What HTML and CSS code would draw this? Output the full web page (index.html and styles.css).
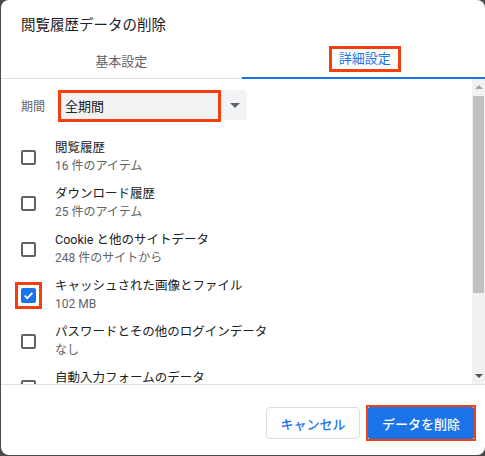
FILE: index.html
```html
<!DOCTYPE html>
<html lang="ja">
<head>
<meta charset="utf-8">
<link rel="stylesheet" href="styles.css">
</head>
<body>
<div class="dialog">
  <div class="title">閲覧履歴データの削除</div>
  <div class="tabs">
    <div class="tab">基本設定</div>
    <div class="tab active"><span class="mark">詳細設定</span></div>
  </div>
  <div class="body">
    <div class="content">
      <div class="period">
        <span class="period-label">期間</span>
        <div class="select">
          <span class="select-value">全期間</span>
          <span class="select-arrow"></span>
        </div>
      </div>
      <div class="row"><span class="cb"></span><div class="txt"><div class="t1">閲覧履歴</div><div class="t2">16 件のアイテム</div></div></div>
      <div class="row"><span class="cb"></span><div class="txt"><div class="t1">ダウンロード履歴</div><div class="t2">25 件のアイテム</div></div></div>
      <div class="row"><span class="cb"></span><div class="txt"><div class="t1">Cookie と他のサイトデータ</div><div class="t2">248 件のサイトから</div></div></div>
      <div class="row"><span class="cb-mark"><span class="cb checked"><svg viewBox="0 0 15 15" width="15" height="15"><path d="M3.6 7.6 L6.3 10.2 L11.4 4.9" fill="none" stroke="#fff" stroke-width="1.9"/></svg></span></span><div class="txt"><div class="t1">キャッシュされた画像とファイル</div><div class="t2">102 MB</div></div></div>
      <div class="row"><span class="cb"></span><div class="txt"><div class="t1">パスワードとその他のログインデータ</div><div class="t2">なし</div></div></div>
      <div class="row"><span class="cb"></span><div class="txt"><div class="t1">自動入力フォームのデータ</div><div class="t2">&nbsp;</div></div></div>
    </div>
    <div class="scrollbar">
      <div class="sb-btn"><span class="sb-up"></span></div>
      <div class="sb-track"><div class="sb-thumb"></div></div>
      <div class="sb-btn"><span class="sb-down"></span></div>
    </div>
  </div>
  <div class="footer">
    <button class="btn cancel">キャンセル</button>
    <span class="btn-mark"><button class="btn primary">データを削除</button></span>
  </div>
</div>
</body>
</html>
```
FILE: styles.css
```css
html, body {
  margin: 0;
  padding: 0;
}
body {
  background: #4b4b4b;
  width: 485px;
  height: 456px;
  overflow: hidden;
  font-family: Roboto, "Noto Sans CJK JP", sans-serif;
  color: #202124;
}
.dialog {
  margin-left: 1px;
  width: 484px;
  height: 455px;
  background: #fff;
  border-radius: 8px;
  display: flex;
  flex-direction: column;
  overflow: hidden;
}
.title {
  padding: 16px 0 0 20px;
  height: 24px;
  font-size: 14.5px;
  line-height: 20px;
  color: #202124;
}
.tabs {
  display: flex;
  height: 38px;
  border-bottom: 1px solid #e0e0e0;
}
.tab {
  flex: 1;
  display: flex;
  align-items: center;
  justify-content: center;
  font-size: 13px;
  color: #5f6368;
  padding-top: 2px;
}
.tab.active {
  color: #1a73e8;
  border-bottom: 2px solid #1a73e8;
  margin-bottom: -1px;
  padding-top: 0;
  padding-left: 3px;
}
.mark {
  display: inline-block;
  border: 3px solid #f4400f;
  padding: 2px 7px 2px 7px;
  line-height: 16px;
}
.body {
  height: 305px;
  display: flex;
  border-bottom: 1px solid #e0e0e0;
}
.content {
  flex: 1;
  overflow: hidden;
  padding-top: 11px;
}
.period {
  display: flex;
  align-items: center;
  height: 30px;
  margin-bottom: 13px;
}
.period-label {
  width: 37px;
  padding-left: 20px;
  font-size: 12px;
  color: #5f6368;
}
.select {
  position: relative;
  width: 189px;
  height: 30px;
  background: #f1f3f4;
  border-radius: 4px;
  display: flex;
  align-items: center;
  justify-content: space-between;
}
.select::after {
  content: "";
  position: absolute;
  left: 0;
  top: 0;
  width: 157px;
  height: 26px;
  border: 3px solid #f4400f;
}
.select-value {
  padding-left: 7px;
  font-size: 13px;
  color: #202124;
}
.select-arrow {
  width: 0;
  height: 0;
  border-left: 5px solid transparent;
  border-right: 5px solid transparent;
  border-top: 5px solid #5f6368;
  margin-right: 7px;
}
.row {
  display: flex;
  align-items: center;
  height: 46px;
}
.cb {
  box-sizing: border-box;
  width: 15px;
  height: 15px;
  margin-left: 20px;
  margin-right: 19px;
  border: 2px solid #5f6368;
  border-radius: 2px;
  flex: none;
  margin-top: 2px;
}
.cb-mark {
  flex: none;
  margin-left: 14px;
  margin-right: 13px;
  margin-top: 2px;
  border: 3px solid #f4400f;
  padding: 3px;
}
.cb.checked {
  display: block;
  margin: 0;
  border: none;
  background: #1a73e8;
}
.cb svg {
  display: block;
}
.txt {
  display: flex;
  flex-direction: column;
}
.t1 {
  font-size: 12.5px;
  line-height: 19px;
  color: #202124;
}
.t2 {
  font-size: 12px;
  line-height: 18px;
  color: #5f6368;
}
.scrollbar {
  width: 13px;
  background: #f1f1f1;
  display: flex;
  flex-direction: column;
}
.sb-btn {
  height: 16px;
  display: flex;
  align-items: center;
  justify-content: center;
}
.sb-up {
  width: 0;
  height: 0;
  border-left: 4px solid transparent;
  border-right: 4px solid transparent;
  border-bottom: 4px solid #a3a3a3;
}
.sb-down {
  width: 0;
  height: 0;
  border-left: 4px solid transparent;
  border-right: 4px solid transparent;
  border-top: 4px solid #505050;
}
.sb-track {
  flex: 1;
  padding: 1px 1px 0 1px;
}
.sb-thumb {
  height: 197px;
  background: #c1c1c1;
}
.footer {
  flex: 1;
  display: flex;
  justify-content: flex-end;
  align-items: flex-start;
  padding: 22px 9px 0 0;
  gap: 6px;
}
.btn {
  height: 32px;
  border-radius: 4px;
  font-family: Roboto, "Noto Sans CJK JP", sans-serif;
  font-size: 13px;
  font-weight: 500;
  padding: 0;
}
.cancel {
  width: 94px;
  background: #fff;
  border: 1px solid #dadce0;
  color: #1a73e8;
}
.btn-mark {
  display: flex;
  border: 2px solid #f4400f;
  margin-top: -2px;
}
.primary {
  width: 106px;
  background: #1a73e8;
  border: none;
  border-radius: 2px;
  color: #fff;
}
```
